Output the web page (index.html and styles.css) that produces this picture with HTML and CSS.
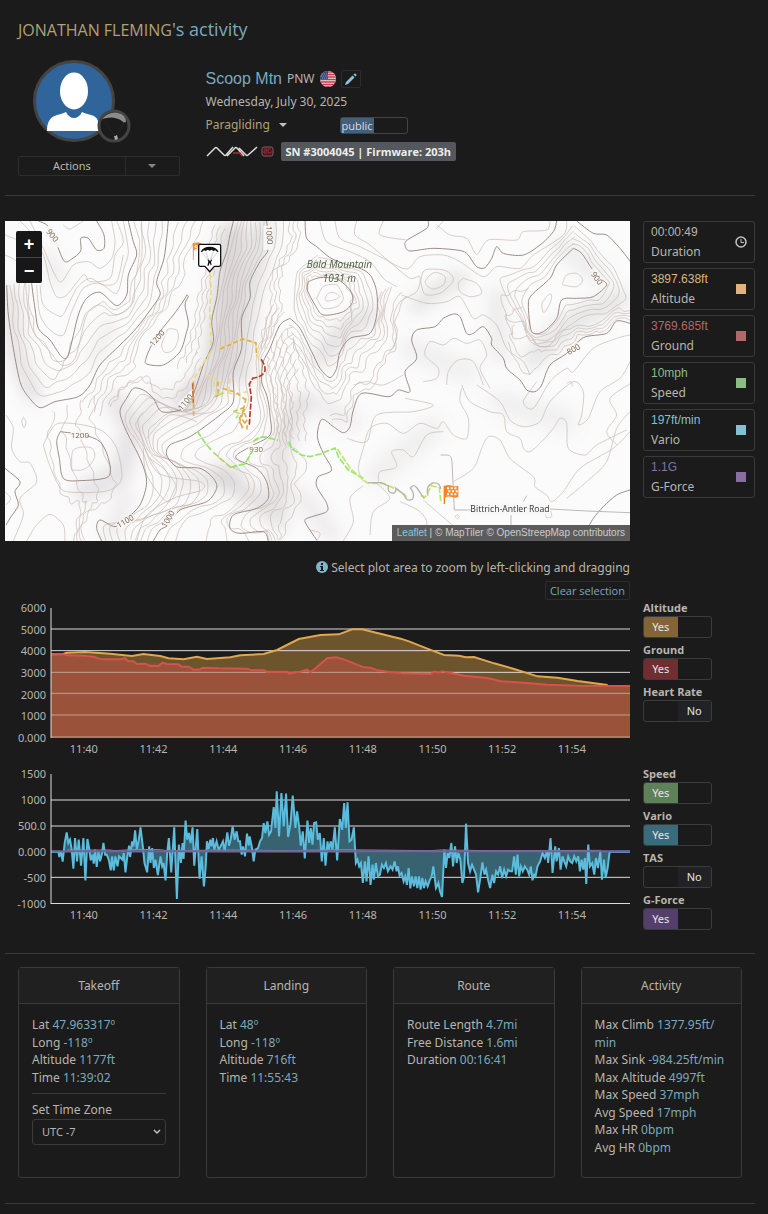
FILE: index.html
```html
<!DOCTYPE html>
<html lang="en">
<head>
<meta charset="utf-8">
<meta name="viewport" content="width=device-width, initial-scale=1">
<title>Activity</title>
<link rel="stylesheet" href="styles.css">
</head>
<body>
<main class="page">
  <h1 class="title"><span class="pilot">JONATHAN FLEMING</span>'s activity</h1>

  <header class="summary">
    <div class="profile">
      <svg class="avatar" viewBox="0 0 96 84" role="img" aria-label="Pilot avatar">
        <circle cx="41" cy="41" r="39.5" fill="#2f659b" stroke="#444" stroke-width="3"/>
        <ellipse cx="41" cy="31" rx="14" ry="18.500" fill="#fff"/>
        <path d="M14 71c0-9 3-14 10-16 4-1 7-2 9-3 2 4 5 6 8 6s6-2 8-6c2 1 5 2 9 3 7 2 8 6 8 16z" fill="#fff"/>
        <circle cx="81" cy="66" r="15" fill="#1b1b1b" stroke="#444" stroke-width="3"/>
        <path d="M69 59q8-8 16-6 8 2 8 9-2 2-4-1-8-6-20-2z" fill="#8b8b8b"/>
        <path d="M81 76l3-1 1 4-3 1z" fill="#aaa"/>
        <path d="M70 60l12 16 10-14" fill="none" stroke="#242424"/>
      </svg>
      <div class="split">
        <button type="button" class="split-main">Actions</button>
        <button type="button" class="split-caret" aria-label="More actions"><span class="caret"></span></button>
      </div>
    </div>
    <div class="info">
      <div class="site">
        <a class="site-name" href="#site">Scoop Mtn</a>
        <span class="region">PNW</span>
        <svg class="flag" viewBox="0 0 16 16" role="img" aria-label="United States">
          <clipPath id="round"><circle cx="8" cy="8" r="8"/></clipPath>
          <g clip-path="url(#round)">
            <path fill="#e9e4e6" d="M0 0h16v16H0z"/>
            <path stroke="#c9344a" stroke-width="1.300" d="M0 1h16M0 3.500h16M0 6h16M0 8.500h16M0 11h16M0 13.500h16M0 15.700h16"/>
            <path fill="#38477f" d="M0 0h8v8H0z"/>
            <path stroke="#aab2d0" stroke-width=".8" stroke-dasharray="1 1" d="M2 3h6M1 5h7M2 7h6"/>
          </g>
        </svg>
        <button type="button" class="edit" aria-label="Edit site">
          <svg viewBox="0 0 12 12"><path fill="#8fc3dc" d="M0 12l1-3 6.500-6.500 2 2L3 11zM8.500 1.500l1-1q1 0 1.500.5t.5 1.500l-1 1z"/></svg>
        </button>
      </div>
      <div class="date">Wednesday, July 30, 2025</div>
      <div class="sport">
        <button type="button" class="sport-pick">Paragliding <span class="caret"></span></button>
        <label class="visibility"><input type="checkbox" checked aria-label="Visibility"><span>public</span></label>
      </div>
      <div class="device">
        <svg class="device-logo" viewBox="0 0 69 12" role="img" aria-label="Nav device">
          <g fill="none" stroke="#ddd" stroke-width="1.500">
            <path d="M1 11L9 3q1-1 2 0l7 7q1 1 2 0l7-8M21 11l8-8q1-1 2 0l7 8M33 3l7 7q1 1 2 0l9-8"/>
            <path d="M27 8h7l2 3" stroke="#b32a36"/>
          </g>
          <rect x="56" y="2" width="11" height="9" rx="2" fill="#3b161b" stroke="#8a5a60"/>
          <path d="M58 4h3v2h-3v2h3M65 4h-3v4h3V6" fill="none" stroke="#a32a3a"/>
        </svg>
        <span class="badge">SN #3004045 | Firmware: 203h</span>
      </div>
    </div>
  </header>

  <section class="split-row">
    <div class="map">
      <svg class="map-canvas" viewBox="15 18 1875 960" preserveAspectRatio="xMidYMid slice" role="img" aria-label="Topographic map with flight track">
        <defs>
          <filter id="soft" x="-50%" y="-50%" width="200%" height="200%"><feGaussianBlur stdDeviation="24"/></filter>
        </defs>
        <rect x="0" y="0" width="1920" height="1000" fill="#fcfbfb"/>
        <g filter="url(#soft)" fill="none" stroke="#8e8a90" stroke-linecap="round">
          <path opacity=".32" stroke-width="80" d="M700 60L670 300 650 480 560 560"/>
          <path opacity=".25" stroke-width="60" d="M790 40L740 260 720 480"/>
          <path opacity=".24" stroke-width="50" d="M30 240L50 420 100 540"/>
          <path opacity=".22" stroke-width="60" d="M250 830L360 780 400 640 350 560"/>
          <path opacity=".24" stroke-width="60" d="M660 780L830 900 840 700 900 560"/>
          <path opacity=".22" stroke-width="60" d="M960 430L1040 340 1110 300"/>
          <path opacity=".2" stroke-width="50" d="M1250 270L1340 210 1380 190"/>
          <path opacity=".2" stroke-width="60" d="M1600 430L1700 330 1860 250"/>
          <path opacity=".17" stroke-width="50" d="M470 540L440 640M540 800L700 780"/>
          <path opacity=".15" stroke-width="50" d="M1490 240L1500 420M1680 90L1800 180"/>
          <path opacity=".14" stroke-width="50" d="M940 560L1060 620M380 850L330 960M900 840L1000 960"/>
          <path opacity=".1" stroke-width="70" d="M1130 780L1300 640M1500 560L1700 620M1230 400L1400 470"/>
          <path opacity=".14" stroke-width="40" d="M140 120L180 200M330 330L280 440"/>
        </g>
        <g class="minor" id="minor"></g>
        <g class="major" id="major"></g>
        <path class="road" d="M1322 720h20q12 0 14 20l7 145h50M1650 882l110 6 130 5M1533 900v40M1570 860l10-18"/>
        <g fill="#f8f7f7">
          <path d="M135 35l22-4 30 55-14 12-30-20zM790 32h28v72h-28zM452 385l38-42 10 16-40 45zM534 565l40-40 12 16-40 48zM212 649h48v24h-48zM346 925l50-28 10 20-50 28zM488 925l26-45 18 10-24 50zM745 690h44v24h-44zM1772 165l15-8 22 38-15 10zM1700 405l34-24 12 16-34 26zM1412 865h236v34h-236z" opacity=".9"/>
        </g>
        <g class="spot">
          <text transform="translate(138 50) rotate(52)">900</text>
          <text transform="translate(798 34) rotate(86)">1000</text>
          <text transform="translate(460 396) rotate(-50)">1200</text>
          <text transform="translate(545 588) rotate(-50)">1100</text>
          <text x="212" y="670">1200</text>
          <text transform="translate(356 940) rotate(-30)">1100</text>
          <text transform="translate(498 940) rotate(-60)">1000</text>
          <text x="748" y="710">930</text>
          <text transform="translate(1772 178) rotate(55)">900</text>
          <text transform="translate(1706 420) rotate(-28)">800</text>
        </g>
        <g class="peak">
          <text x="1018" y="159">Bald Mountain</text>
          <text x="1018" y="200">1031 m</text>
        </g>
        <text class="street" x="1530" y="890">Bittrich-Antler Road</text>
        <g class="track">
          <g stroke="#e8dc86">
            <path d="M630 175l4 50-5 60 3 50 1 60"/>
            <path d="M632 412l-30 45-17 30-6 20M655 400l36-16 34-12 28 6 14 10 4 34 10 16"/>
            <path d="M618 482l22 2 16 22 14-6M642 500l6 40 30-8 26 6 38-8M690 490l-4 44"/>
          </g>
          <g stroke="#dfae52" stroke-dasharray="14 8">
            <path d="M580 500l1 110M660 402l68-30 40 12 2 40M654 500v36M738 550l-14 60 18 24-2 10M700 590l36-14-20 40 14 24M668 520l40 12 30 24M646 545l22-12M718 606l8 30 16-22-14-30"/>
          </g>
          <g stroke="#b53c22" stroke-dasharray="18 5">
            <path d="M783 433q14 18 12 34-8 20-36 22l-11 18 6 40-4 50-2 32"/>
            <path d="M578 505l2 60" stroke="#c9703a"/>
          </g>
          <g stroke="#93e66a" stroke-dasharray="20 5">
            <path d="M592 648l22 34 22 26M692 757l22-6 20-4 24-40M760 680q20-20 44-12l30 8M866 680l8 20 30 20 26 5 30-8 45-18 12 30 28 36 45 25"/>
            <path d="M640 712l50 44 22-2" stroke="#b8d468"/>
            <path d="M700 588l18 8-10 14M650 535l18 4" stroke="#a8e882"/>
            <path d="M1012 702l40 60 50 42 50 2 40 18 28 22M1262 842l14 4 18-34 24 6 4 40" stroke="#bfe86a"/>
          </g>
          <g stroke="#b9b4ae" stroke-width="4" stroke-dasharray="none">
            <path d="M1105 803h40l20 10q-4 20 14 22 12-4 8-16l26 20q4 22 24 14 10-14-6-34 10-14 20 0l22 32M1284 842q-8-30 14-38 22-2 24 18"/>
          </g>
        </g>
        <path d="M578 86l16-3 8 2v18l-22 2v30" fill="#ea902f" stroke="#d8893c" stroke-width="2"/>
        <path d="M593 92h-8v5h8v6h-9" fill="none" stroke="#fff" stroke-width="3"/>
        <g>
          <path d="M600 88h58q4 0 4 4v57q0 5-5 5h-14l-14 16-14-16h-14q-5 0-5-5V92q0-4 4-4z" fill="#fff" stroke="#111" stroke-width="4"/>
          <path d="M602 110q8-15 27-15t27 15l-4 1-6-5-6 2-5-4-6 3-6-3-5 4-6-2-6 5z" fill="#111"/>
          <path d="M604 110l23 28M617 110l11 28M640 110l-10 28M654 110l-23 28" fill="none" stroke="#777"/>
          <path d="M624 133l4 4h4l3-4 1 3-3 5 2 9h-3l-3-7-3 9h-4l3-12-2-5z" fill="#111"/>
        </g>
        <path d="M1333 812v55" stroke="#ef7f22" stroke-width="4"/>
        <path d="M1335 812q10-4 20 0t20 0v34q-10 4-20 0t-20 2z" fill="#f08a2c"/>
        <path d="M1341 820h32M1345 829h30M1341 838h32" stroke="#fff" stroke-width="6" stroke-dasharray="6 5"/>
      </svg>
      <div class="zoom">
        <button type="button" aria-label="Zoom in">+</button>
        <button type="button" aria-label="Zoom out">−</button>
      </div>
      <div class="credit"><a href="#leaflet">Leaflet</a> | © MapTiler © OpenStreepMap contributors</div>
    </div>

    <div class="stats">
      <div class="stat"><div><div class="value">00:00:49</div><div>Duration</div></div>
        <svg class="clock" viewBox="0 0 12 12" aria-hidden="true"><circle cx="6" cy="6" r="5" fill="none" stroke="#c5c2be" stroke-width="1.500"/><path d="M6 3v3.500h3" fill="none" stroke="#c5c2be"/></svg></div>
      <div class="stat amber"><div><div class="value">3897.638ft</div><div>Altitude</div></div><span class="swatch"></span></div>
      <div class="stat red"><div><div class="value">3769.685ft</div><div>Ground</div></div><span class="swatch"></span></div>
      <div class="stat green"><div><div class="value">10mph</div><div>Speed</div></div><span class="swatch"></span></div>
      <div class="stat blue"><div><div class="value">197ft/min</div><div>Vario</div></div><span class="swatch"></span></div>
      <div class="stat violet"><div><div class="value">1.1G</div><div>G-Force</div></div><span class="swatch"></span></div>
    </div>
  </section>

  <section class="split-row hint-row">
    <div class="hint">
      <p><svg class="info-icon" viewBox="0 0 12 12" aria-hidden="true"><circle cx="6" cy="6" r="6" fill="#82b4cc"/><path d="M5 2h2v2H5zM4 5h3v4h1v1H4V9h1V6H4z" fill="#1b1b1b"/></svg> Select plot area to zoom by left-clicking and dragging</p>
      <button type="button" class="clear">Clear selection</button>
    </div>
  </section>

  <section class="split-row chart-row">
    <div class="chart">
      <div class="y-axis"><span>6000</span><span>5000</span><span>4000</span><span>3000</span><span>2000</span><span>1000</span><span>0.000</span></div>
      <svg class="plot" viewBox="153 177 1734 390" preserveAspectRatio="none" role="img" aria-label="Altitude and ground chart">
        <path class="alt-fill" d="M153 316L190 315 200 311 255 309 330 314 395 321 430 315 480 321 505 328 550 331 590 323 620 330 690 325 720 319 790 315 830 303 895 270 960 258 1015 256 1055 241 1085 241 1130 252 1200 269 1225 277 1280 299 1330 318 1375 320 1395 325 1420 324 1480 343 1540 360 1610 382 1670 386 1730 396 1820 408 1887 410V567H153z"/>
        <path class="ground-fill" d="M153 316L190 316 200 319 250 320 280 323 305 331 365 331 373 327 385 337 400 337 410 345 435 344 450 351 475 351 487 341 500 345 535 346 545 353 565 353 580 362 600 361 607 356 655 358 740 359 755 364 790 364 800 369 860 368 865 373 900 368 920 362 930 370 945 358 960 345 980 328 1007 325 1030 331 1060 343 1090 355 1110 356 1130 364 1170 370 1200 372 1250 374 1290 375 1300 368 1315 371 1325 367 1365 375 1390 380 1460 387 1500 397 1570 401 1640 407 1730 410 1887 411V567H153z"/>
        <path class="grid" d="M153 240H1887M153 305H1887M153 370H1887M153 433H1887M153 498H1887M153 564H1887"/>
        <path class="ground-fill over" d="M153 316L280 323 410 345 487 341 580 362 740 359 900 368 930 370 980 328 1007 325 1090 355 1200 372 1325 367 1500 397 1640 407 1887 411V567H153z"/>
        <path class="alt-line" d="M153 316L190 315 200 311 255 309 330 314 395 321 430 315 480 321 505 328 550 331 590 323 620 330 690 325 720 319 790 315 830 303 895 270 960 258 1015 256 1055 241 1085 241 1130 252 1200 269 1225 277 1280 299 1330 318 1375 320 1395 325 1420 324 1480 343 1540 360 1610 382 1670 386 1730 396 1820 408"/>
        <path class="ground-line" d="M153 316L190 316 200 319 250 320 280 323 305 331 365 331 373 327 385 337 400 337 410 345 435 344 450 351 475 351 487 341 500 345 535 346 545 353 565 353 580 362 600 361 607 356 655 358 740 359 755 364 790 364 800 369 860 368 865 373 900 368 920 362 930 370 945 358 960 345 980 328 1007 325 1030 331 1060 343 1090 355 1110 356 1130 364 1170 370 1200 372 1250 374 1290 375 1300 368 1315 371 1325 367 1365 375 1390 380 1460 387 1500 397 1570 401 1640 407 1730 410 1887 411"/>
        <path class="axis" d="M153 177V567"/>
      </svg>
      <div class="x-axis"><span>11:40</span><span>11:42</span><span>11:44</span><span>11:46</span><span>11:48</span><span>11:50</span><span>11:52</span><span>11:54</span></div>
    </div>
    <div class="toggles">
      <label class="toggle amber"><span class="toggle-name">Altitude</span><input type="checkbox" checked><span class="switch"><span>Yes</span></span></label>
      <label class="toggle red"><span class="toggle-name">Ground</span><input type="checkbox" checked><span class="switch"><span>Yes</span></span></label>
      <label class="toggle"><span class="toggle-name">Heart Rate</span><input type="checkbox"><span class="switch off"><span>No</span></span></label>
    </div>
  </section>

  <section class="split-row chart-row">
    <div class="chart">
      <div class="y-axis"><span>1500</span><span>1000</span><span>500.0</span><span>0.000</span><span>-500</span><span>-1000</span></div>
      <svg class="plot" viewBox="153 43 1734 390" preserveAspectRatio="none" role="img" aria-label="Speed, vario and g-force chart">
        <path class="grid" d="M153 121H1887M153 199H1887M153 276H1887M153 353H1887M153 431.500H1887"/>
        <path class="vario" id="vario" d=""/>
        <path class="speed-line" d="M200 271H330L345 273 410 269 480 270 500 273 690 271 880 273 1000 270 1290 273 1320 271 1480 273 1800 272"/>
        <path class="force-line" d="M153 275H1887"/>
        <path class="axis" d="M153 43V433"/>
      </svg>
      <div class="x-axis"><span>11:40</span><span>11:42</span><span>11:44</span><span>11:46</span><span>11:48</span><span>11:50</span><span>11:52</span><span>11:54</span></div>
    </div>
    <div class="toggles">
      <label class="toggle green"><span class="toggle-name">Speed</span><input type="checkbox" checked><span class="switch"><span>Yes</span></span></label>
      <label class="toggle blue"><span class="toggle-name">Vario</span><input type="checkbox" checked><span class="switch"><span>Yes</span></span></label>
      <label class="toggle"><span class="toggle-name">TAS</span><input type="checkbox"><span class="switch off"><span>No</span></span></label>
      <label class="toggle violet"><span class="toggle-name">G-Force</span><input type="checkbox" checked><span class="switch"><span>Yes</span></span></label>
    </div>
  </section>

  <section class="cards">
    <article class="card">
      <h2>Takeoff</h2>
      <div class="card-body">
        <div>Lat <b>47.963317º</b></div>
        <div>Long <b>-118º</b></div>
        <div>Altitude <b>1177ft</b></div>
        <div>Time <b>11:39:02</b></div>
        <div class="zone">
          <label for="zone">Set Time Zone</label>
          <div class="select-wrap">
            <select id="zone"><option>UTC -7</option></select>
            <svg viewBox="0 0 8 6" aria-hidden="true"><path d="M1 1l3 3 3-3" fill="none" stroke="#c5c2be" stroke-width="1.500"/></svg>
          </div>
        </div>
      </div>
    </article>
    <article class="card">
      <h2>Landing</h2>
      <div class="card-body">
        <div>Lat <b>48º</b></div>
        <div>Long <b>-118º</b></div>
        <div>Altitude <b>716ft</b></div>
        <div>Time <b>11:55:43</b></div>
      </div>
    </article>
    <article class="card">
      <h2>Route</h2>
      <div class="card-body">
        <div>Route Length <b>4.7mi</b></div>
        <div>Free Distance <b>1.6mi</b></div>
        <div>Duration <b>00:16:41</b></div>
      </div>
    </article>
    <article class="card">
      <h2>Activity</h2>
      <div class="card-body">
        <div>Max Climb <b>1377.95ft/<wbr>min</b></div>
        <div>Max Sink <b>-984.25ft/min</b></div>
        <div>Max Altitude <b>4997ft</b></div>
        <div>Max Speed <b>37mph</b></div>
        <div>Avg Speed <b>17mph</b></div>
        <div>Max HR <b>0bpm</b></div>
        <div>Avg HR <b>0bpm</b></div>
      </div>
    </article>
  </section>
</main>
<script src="plots.js"></script>
</body>
</html>
```
FILE: plots.js
```js
const parse = s => s.trim().split(/\s+/).map(p => p.split(',').map(Number));

// Catmull-Rom spline through the points, as an SVG path.
function smooth(pts) {
  let d = 'M' + pts[0].map(Math.round).join(' ');
  for (let i = 0; i < pts.length - 1; i++) {
    const a = pts[i - 1] || pts[i], b = pts[i], c = pts[i + 1], e = pts[i + 2] || c;
    d += 'C' + [b[0] + (c[0] - a[0]) / 7, b[1] + (c[1] - a[1]) / 7,
      c[0] - (e[0] - b[0]) / 7, c[1] - (e[1] - b[1]) / 7, c[0], c[1]].map(Math.round).join(' ');
  }
  return d;
}

function resample(pts, n) {
  const acc = [0];
  for (let i = 1; i < pts.length; i++) acc.push(acc[i - 1] + Math.hypot(pts[i][0] - pts[i - 1][0], pts[i][1] - pts[i - 1][1]));
  const out = [];
  for (let k = 0, i = 1; k <= n; k++) {
    const t = acc[acc.length - 1] * k / n;
    while (i < pts.length - 1 && acc[i] < t) i++;
    const f = (t - acc[i - 1]) / (acc[i] - acc[i - 1]);
    out.push([pts[i - 1][0] + (pts[i][0] - pts[i - 1][0]) * f, pts[i - 1][1] + (pts[i][1] - pts[i - 1][1]) * f]);
  }
  return out;
}

function add(id, pts) {
  const p = document.createElementNS('http://www.w3.org/2000/svg', 'path');
  p.setAttribute('d', smooth(pts));
  document.getElementById(id).appendChild(p);
}

// Contours lying between two neighbouring index contours.
function between(a, b, count) {
  const n = 32, p = resample(parse(a), n), q = resample(parse(b), n);
  for (let k = 1; k <= count; k++) {
    const t = k / (count + 1);
    add('minor', p.map((v, i) => [
      v[0] + (q[i][0] - v[0]) * t + 4 * Math.sin(i * 1.7 + k),
      v[1] + (q[i][1] - v[1]) * t + 4 * Math.cos(i * 2.1 + k)]));
  }
}

const L = {
  bowl: '95,205 105,280 115,340 150,375 185,425 205,420 235,300 260,250 300,232 350,272 380,240 385,180 410,120 400,80 385,18',
  west: '20,210 25,300 40,400 60,500 85,545 120,578 165,560 235,545 270,510 300,450 360,390 400,350 440,300 480,240 470,200 492,130 500,70 505,18',
  ridge: '700,18 690,60 680,110 660,170 650,250 635,320 640,380 610,450 590,510 570,560 540,585 485,590 460,550 430,525 400,520 380,550 360,590 380,650 420,730 440,800 420,870 380,910 345,935 300,915 290,940 305,978',
  spur: '800,18 806,100 780,140 750,200 750,250 725,310 725,400 700,470 700,560 660,600 600,645 560,670 510,690 500,720 530,755 600,760 640,790 650,820 620,860 540,885 505,930 480,945 460,978',
  gully: '870,310 840,330 810,400 790,440 785,500 800,540 810,600 810,660 750,695 710,720 715,735 770,760 800,800 805,850 770,880 700,900 690,940 720,955 790,950 805,978',
  bald: '915,18 920,70 950,95 990,128 1030,145 1080,160 1112,182 1130,230 1130,300 1110,355 1050,370 1020,410 1010,460 990,488 960,460 935,410 900,340 870,310',
  baldTop: '925,200 960,188 1010,192 1050,225 1058,260 1030,290 970,300 945,270 922,225 925,200',
  north: '1285,18 1280,40 1222,75 1215,90 1230,108 1300,100 1370,105 1400,115 1430,155 1455,158 1475,130 1490,95 1510,115 1570,120 1620,90 1660,50 1670,18',
  corner: '1730,18 1780,55 1820,60 1860,100 1895,145',
  knob: '1720,100 1670,150 1650,190 1595,240 1585,270 1595,350 1630,350 1670,310 1685,255 1730,250 1780,245 1820,210 1800,190 1775,160 1745,115 1720,100',
  east: '1890,325 1850,318 1820,355 1750,368 1700,415 1650,450 1625,510 1605,530 1580,525 1560,495 1520,460 1510,430 1475,390 1475,370 1450,335 1420,355 1400,355 1380,305 1360,297 1330,310 1305,335 1250,345 1235,375 1250,430 1215,470 1230,530 1195,525 1165,545 1085,535 1060,585 1050,635 1030,653 1000,635 965,613 952,665 970,715 995,765 955,785 950,815 980,865 980,890 930,907 915,920 950,975',
};
Object.values(L).forEach(s => add('major', parse(s)));
[
  '115,18 150,40 190,135 215,132 242,108 242,70 265,70 290,105 312,100 312,60 290,18',
  '560,240 550,258 520,300 480,350 455,390 438,430 440,447 490,450 540,410 560,350 565,320 555,270 565,245 560,240',
  '180,650 170,680 178,730 190,790 240,797 325,785 325,730 300,680 250,660 180,650',
  '15,760 60,800 45,830 55,870 30,910 18,930',
  '1890,825 1850,840 1810,875 1780,910 1760,945',
].forEach(s => add('major', parse(s)));

const gullyEdge = '800,250 790,330 770,400 760,500 770,580 760,640 690,680 640,700 620,735 700,750 730,800 720,850 660,890 590,900 560,978';
between(L.bowl, L.west, 5);
between(L.ridge, L.spur, 8);
between(L.spur, '870,18 880,70 850,120 840,180 ' + gullyEdge, 2);
between(gullyEdge, L.gully, 3);
between('850,18 860,70 840,120 800,190 800,260 780,330 770,400', '910,18 912,80 890,120 860,150 850,220 860,290 800,400', 3);
between(L.baldTop, '960,110 1030,145 1080,160 1112,182 1130,230 1130,300 1110,355 1050,370 1010,460 990,488 935,410 880,320 870,220 900,140 960,110', 6);
between(L.gully, '900,480 870,540 890,600 880,700 930,720 960,760 900,800 930,860 900,900 850,978', 6);
between('870,320 900,370 930,440 950,540 930,600 940,680', '790,440 785,500 800,540 810,600 815,660', 5);
between(L.west.split(' ').slice(7).reverse().join(' '), '640,18 600,90 560,140 580,180 530,230 500,290 430,370 410,440 430,470 360,500 330,560 310,620', 4);
between('690,40 660,140 640,220 620,330 620,400', '630,30 610,90 600,180 580,260 570,330 540,420 500,480', 3);
between('610,440 580,530 520,580 480,570 440,500 380,510 340,580', '580,400 550,450 500,500 460,490 430,460 380,500 320,560', 2);
between('110,600 130,620 100,660 105,760 130,840 180,870 220,850 230,900 215,978', '330,530 310,600 340,650 380,740 400,800 370,850 280,890 250,930 260,978', 4);
between(L.east.split(' ').slice(0, 12).join(' '), '1895,280 1850,270 1790,320 1690,330 1640,370 1600,380 1570,340 1560,280 1500,260 1490,180 1560,170 1600,170', 4);
between(L.knob, '1720,20 1640,100 1590,150 1480,170 1490,230 1560,310 1580,400 1640,410 1710,350 1760,320 1850,300 1895,260 1860,160 1800,100 1770,50 1720,20', 4);
between(L.bald.split(' ').slice(7).join(' '), '1190,215 1160,260 1165,330 1180,380 1120,440 1100,490 1060,480 1030,580 990,590 950,550 920,480 900,440 880,400', 4);
between('1190,215 1160,260 1165,330 1180,380 1120,440 1100,490 1060,480 1030,580 990,590', '1230,260 1200,330 1200,400 1160,440 1130,530 1070,560 1040,640 1000,620', 2);

[
  '15,60 60,80 90,120 95,205', '60,18 90,50 130,120 150,200 170,245 200,240 250,180 270,200 330,190 345,120 370,80 350,18',
  '90,18 130,100 165,180 185,200 220,150 265,140 300,160 335,130 345,80 335,18',
  '190,30 210,42 250,18', '120,210 130,270 170,300 190,298 230,220 270,190 310,210 350,200 370,120',
  '110,210 120,300 150,345 190,360 215,290 250,220 300,205 350,235 372,160 385,110 370,18',
  '15,120 50,140 75,200 85,290 100,350 150,410 185,450 225,430 260,300 300,270 350,300 400,260 405,190 425,130 425,18',
  '500,350 485,390 495,412 520,405 535,370 530,345 505,342 500,350',
  '215,765 220,705 270,697 285,720 270,750 245,765 215,765',
  '130,690 150,650 175,625 250,630 310,650 350,700 365,790 320,828 200,830 170,800 145,740 130,690',
  '65,620 70,608 78,622 72,638 65,620', '18,600 40,640 35,700 60,740 90,745 110,800 60,850 70,900 40,978',
  '80,978 110,930 150,898 190,930 195,978', '15,830 32,850 18,870', '430,590 415,630 470,770 600,800 605,825 520,850 440,900 410,978',
  '975,250 985,235 1000,232 1020,245 1000,255 980,258 975,250', '950,250 970,215 1010,210 1030,250 1010,275 970,280 950,250',
  '1275,200 1290,180 1310,172 1335,185 1330,210 1300,222 1280,212 1275,200', '1262,200 1275,165 1330,165 1355,180 1358,200 1320,235 1275,238 1262,200',
  '1390,190 1430,205 1445,235 1410,245 1380,230 1375,205 1390,190',
  '1005,18 1020,70 1080,95 1150,130 1220,162 1260,125 1330,120 1380,140 1450,185 1490,155 1560,160 1600,120 1690,60 1700,18',
  '960,18 980,80 1050,110 1110,140 1150,190 1190,215',
  '1070,18 1065,60 1110,90 1180,150 1230,190 1260,185 1250,230 1200,260 1180,310 1190,370 1170,410',
  '1310,30 1350,60 1400,70 1430,118 1465,75 1550,75 1570,50 1640,45 1650,18', '1150,18 1140,60 1220,75', '1310,40 1330,18',
  '1205,240 1280,265 1340,260 1380,245 1420,310 1450,300 1490,330 1520,400 1570,440 1590,480',
  '1690,200 1700,180 1730,175 1748,195 1730,215 1690,210 1690,200', '1628,290 1626,265 1645,240 1655,240 1650,265 1635,290 1628,290',
  '1270,500 1310,490 1315,460 1275,420 1290,380 1330,390 1360,370 1400,385 1440,375 1460,420 1440,460 1470,520',
  '1340,510 1345,470 1375,435 1420,440 1450,510',
  '1385,520 1380,560 1405,610 1400,670 1360,660 1330,620 1310,640 1260,625 1210,655 1160,625 1110,640 1090,700 1075,760 1090,800',
  '1385,510 1410,560 1470,590 1510,600 1520,650 1560,670 1570,700 1590,710 1625,680 1660,640 1680,610 1700,625 1705,700 1755,720 1790,690 1880,645',
  '1135,800 1140,770 1190,755 1175,710 1210,705 1240,725 1280,660 1330,650',
  '1360,800 1420,760 1445,700 1465,665 1500,675 1530,730 1600,785 1605,815 1640,840 1655,860 1690,830 1740,760 1840,700 1890,650',
  '1430,510 1500,560 1530,615 1570,635 1620,620 1650,560 1720,500 1750,530 1745,600 1735,630 1765,610 1800,530 1860,490 1890,440',
  '1610,500 1570,560 1600,580 1650,500 1700,460 1720,470 1780,400 1850,370 1890,360',
  '1900,500 1830,550 1850,600 1820,650 1850,690', '1700,505 1712,500 1718,515',
  '1200,860 1260,890 1280,930 1230,978', '1270,855 1310,890 1370,940', '1090,812 1050,850 1060,920 1030,978', '1130,805 1170,850 1120,890 1110,960',
  '1365,904 1372,900 1378,905 1372,911 1365,904', '1635,895 1640,908 1655,905 1652,888',
  '930,945 960,955 950,978', '1215,550 1300,570 1240,590 1130,600 1100,680 1040,670', '1060,510 1100,500 1150,510 1210,480',
  '440,670 510,600 590,620', '430,700 440,780 500,860 530,820 500,770 450,730',
  '1890,590 1850,640 1820,740 1760,800 1700,850',
].forEach(s => add('minor', parse(s)));

// Vertical speed samples.
const vario = parse(`175,276 178,292 183,276 188,306 194,250 200,218 205,250 210,240 215,270 220,327 225,235 231,305 236,240 243,318 250,235 256,362 262,238 267,265 272,302 277,285 281,312 285,270 290,322 295,275 300,305 306,280 310,250 315,285 320,285 326,300 332,332 336,290 341,332 346,290 352,320 357,290 362,295 367,300 371,280 376,338 381,295 387,258 390,292 396,245 400,260 405,212 410,270 416,240 421,203 428,260 433,310 441,338 447,260 451,310 456,265 461,325 466,300 473,346 481,290 486,320 490,310 496,362 501,280 506,235 513,338 522,203 530,418 536,255 542,310 547,250 550,298 556,183 561,240 566,220 571,250 577,203 582,318 591,208 598,357 604,290 611,380 616,325 620,245 625,268 630,240 634,260 638,235 642,270 649,245 655,270 661,260 668,245 673,275 681,218 686,258 691,240 697,200 703,240 709,215 714,245 719,245 724,285 728,260 734,290 740,222 745,258 748,230 755,265 760,305 765,270 773,265 779,245 785,235 790,190 795,220 801,185 806,225 812,215 820,142 825,205 829,95 836,230 843,100 850,200 857,102 863,232 870,195 877,108 885,205 890,155 896,200 901,258 907,215 913,296 921,183 926,250 931,205 936,255 941,190 947,188 952,240 958,220 964,305 970,235 975,318 981,245 985,270 991,245 996,270 1003,203 1010,302 1018,178 1025,210 1031,130 1036,205 1041,128 1047,245 1053,240 1060,203 1066,310 1071,300 1076,320 1081,310 1087,370 1093,305 1098,365 1104,290 1110,376 1116,315 1120,360 1126,310 1132,350 1138,345 1144,315 1150,325 1156,310 1162,335 1170,320 1176,330 1182,305 1188,335 1192,320 1197,348 1203,340 1209,365 1214,350 1219,376 1224,325 1229,386 1234,350 1240,380 1245,350 1250,385 1255,350 1260,390 1265,355 1270,385 1275,365 1281,380 1287,362 1293,350 1298,320 1303,362 1306,385 1313,370 1318,395 1324,412 1331,270 1336,325 1341,280 1346,295 1352,250 1357,320 1363,260 1368,310 1373,280 1379,300 1385,370 1390,350 1396,192 1402,310 1408,335 1414,315 1420,330 1426,345 1432,398 1438,360 1445,308 1451,345 1456,330 1462,360 1468,385 1475,345 1480,370 1486,335 1492,345 1498,320 1504,355 1510,330 1516,350 1522,330 1528,335 1534,335 1540,290 1545,345 1550,285 1555,350 1560,320 1566,335 1572,320 1579,330 1585,345 1590,320 1595,362 1600,345 1604,350 1610,320 1618,305 1625,280 1632,295 1638,275 1642,310 1649,235 1655,340 1663,260 1667,305 1674,265 1679,330 1685,290 1690,305 1696,320 1702,290 1708,305 1714,310 1720,290 1726,305 1732,290 1737,335 1742,300 1747,330 1752,295 1756,373 1762,255 1767,320 1774,310 1780,345 1785,295 1791,325 1798,276 1803,360 1809,300 1814,355 1820,325 1826,276`);
document.getElementById('vario').setAttribute('d', 'M153 276L' + vario.map(p => p.join(' ')).join('L') + 'H1887');
```
FILE: styles.css
```css
* { box-sizing: border-box; }

body {
  margin: 0;
  background: #1b1b1b;
  color: #b9b5ae;
  font: 12px/1.46 "Noto Sans", "Open Sans", sans-serif;
}

button, select { font: inherit; color: inherit; background: none; border: 0; padding: 0; }
a { color: #7aa9bf; text-decoration: none; }
p { margin: 0; }

.page { padding: 16px 13px 10px 5px; }

.title { margin: 0 13px; color: #7aa9bf; font: 18px/26px "Open Sans", sans-serif; }
.pilot { color: #b3a078; font-size: 16px; }

.summary {
  display: grid;
  grid-template-columns: 1fr 3fr;
  margin-top: 17px;
  height: 136px;
  border-bottom: 1px solid #3a3a3a;
}
.profile { display: flex; flex-direction: column; padding: 0 13px; }
.avatar { width: 100px; height: 84px; margin-left: 13px; }
.split {
  display: flex;
  height: 20px;
  margin-top: 12px;
  border: 1px solid #2e2e2e;
  border-radius: 2px;
  font-size: 11px;
}
.split-main { flex: 2; }
.split-caret { flex: 1; border-left: 1px solid #2a2a2a; color: #888; }
.caret {
  display: inline-block;
  border: 4px solid transparent;
  border-top-color: currentColor;
  border-bottom: 0;
  vertical-align: 2px;
}

.info { padding: 6px 13px 0; display: flex; flex-direction: column; }
.site, .sport, .device { display: flex; align-items: center; }
.site { height: 25px; gap: 5px; }
.site-name { font: 16px/24px "Liberation Sans", sans-serif; }
.flag { width: 16px; height: 16px; }
.edit { width: 20px; height: 18px; border: 1px solid #2c2c2c; border-radius: 2px; }
.edit svg { display: block; width: 12px; height: 12px; margin: auto; }
.date { height: 22px; line-height: 22px; }
.sport { height: 24px; }
.sport-pick { color: #b3a078; text-align: left; width: 134px; line-height: 20px; }
.sport-pick .caret { color: #c5c2be; margin-left: 6px; }
.visibility {
  display: flex;
  width: 68px;
  height: 17px;
  border: 1px solid #444;
  border-radius: 3px;
  color: #ddd;
  font: 11px/15px "Open Sans", sans-serif;
  position: relative;
}
.visibility span { width: 50%; background: #41607c; text-align: center; }
.visibility input, .toggle input { position: absolute; inset: 0; opacity: 0; margin: 0; width: 100%; height: 100%; }
.device { height: 28px; gap: 6px; }
.device-logo { width: 69px; height: 12px; }
.badge {
  padding: 0 5px;
  border-radius: 2px;
  background: #54575b;
  color: #eee;
  font: bold 11px/19px "Open Sans", sans-serif;
}

.split-row { display: grid; grid-template-columns: minmax(0, 1fr) 112px; column-gap: 13px; }
.summary + .split-row { margin-top: 25px; }

.map { position: relative; aspect-ratio: 625 / 320; overflow: hidden; }
.map-canvas { display: block; width: 100%; height: 100%; }
.minor, .major, .road, .track { fill: none; }
.minor { stroke: #c6b6ae; stroke-width: 2; }
.major { stroke: #9c8c83; stroke-width: 3; }
.road { stroke: #bdb9b7; stroke-width: 3; }
.track { stroke-width: 5; stroke-dasharray: 16 9; }
.spot { fill: #7d654c; font: 24px "Open Sans", sans-serif; }
.peak { fill: #46603a; font: italic 30px "Open Sans", sans-serif; text-anchor: middle; }
.street { fill: #333; font: 26px "Open Sans", sans-serif; text-anchor: middle; }
.zoom {
  position: absolute;
  left: 11px;
  top: 10px;
  display: grid;
  width: 26px;
  background: #171717;
  border-radius: 2px;
}
.zoom button { height: 26px; color: #fff; font: bold 18px/24px "Liberation Sans", sans-serif; }
.zoom button + button { border-top: 1px solid #444; }
.credit {
  position: absolute;
  right: 0;
  bottom: 0;
  padding: 0 5px;
  background: #5c5c5c;
  color: #ccc;
  font: 10px/16px "Liberation Sans", sans-serif;
}
.credit a { color: #8cc4dc; }

.stats { display: grid; gap: 5px; align-content: start; }
.stat {
  display: flex;
  align-items: center;
  justify-content: space-between;
  height: 42px;
  padding: 0 7px;
  border: 1px solid #3a3a3a;
  border-radius: 3px;
  line-height: 19px;
}
.value { font-family: "Liberation Sans", sans-serif; color: var(--text); }
.swatch { width: 10px; height: 10px; background: var(--text); margin-right: 1px; }
.clock { width: 12px; height: 12px; }
.amber { --text: #ddb57c; --fill: #836439; }
.red { --text: #b0686b; --fill: #702e31; }
.green { --text: #88bd86; --fill: #5f8159; }
.blue { --text: #86bfd2; --fill: #3b6a7b; }
.violet { --text: #876fa3; --fill: #533f69; }

.hint-row { padding-top: 18px; }
.hint { display: flex; flex-direction: column; align-items: flex-end; gap: 4px; line-height: 18px; }
.info-icon { width: 12px; height: 12px; vertical-align: -1px; }
.clear { height: 19px; padding: 0 4px; border: 1px solid #2c2c2c; border-radius: 2px; color: #7aa9bf; font: 11px/16px "Open Sans", sans-serif; }

.chart-row { min-height: 166px; }
.chart { display: grid; grid-template-columns: 41px minmax(0, 1fr); grid-template-rows: 130px 22px; column-gap: 5px; padding-top: 8px; }
.y-axis { display: flex; flex-direction: column; justify-content: space-between; margin: -7px 0; text-align: right; font-size: 11px; line-height: 14px; }
.plot { display: block; width: 100%; height: 130px; overflow: visible; }
.plot path { vector-effect: non-scaling-stroke; fill: none; }
.plot .grid { stroke: #dcdcdc; }
.plot .axis { stroke: #ddd; }
.plot .alt-fill { fill: #6c542d; }
.plot .ground-fill { fill: #9b533b; }
.plot .over { opacity: .45; }
.plot .alt-line { stroke: #e0a74e; stroke-width: 2; }
.plot .ground-line { stroke: #d6534b; stroke-width: 2; }
.plot .vario { stroke: #5bbcdc; stroke-width: 2; fill: #376270; }
.plot .speed-line { stroke: #79a070; }
.plot .force-line { stroke: #7560a8; stroke-width: 2; }
.x-axis { grid-column: 2; display: grid; grid-template-columns: repeat(8, 12%); margin-left: -2px; text-align: center; font-size: 11px; line-height: 22px; }

.toggles { display: grid; gap: 4px; align-content: start; font-size: 11px; }
.toggle { position: relative; width: 69px; }
.toggle-name { display: block; height: 16px; line-height: 16px; font-family: "Open Sans", sans-serif; font-weight: 700; white-space: nowrap; }
.switch { display: flex; height: 22px; border: 1px solid #3c3c3c; border-radius: 3px; overflow: hidden; color: #e5e5e5; line-height: 20px; text-align: center; }
.switch span { width: 50%; background: var(--fill); }
.switch.off { justify-content: flex-end; }
.switch.off span { background: #212225; }

.cards {
  display: grid;
  grid-template-columns: repeat(4, minmax(0, 1fr));
  gap: 26px;
  margin-top: 21px;
  padding: 13px 13px 25px;
  border-top: 1px solid #3a3a3a;
  border-bottom: 1px solid #3a3a3a;
}
.card { border: 1px solid #3a3a3a; border-radius: 3px; }
.card h2 { margin: 0; background: #202020; border-bottom: 1px solid #3a3a3a; font-size: 12px; font-weight: 400; line-height: 35px; text-align: center; }
.card-body { padding: 12px 13px 21px; }
.card b { color: #7aa9bf; font-weight: 400; }
.zone { margin-top: 7px; padding-top: 7px; border-top: 1px solid #3a3a3a; }
.zone label { display: block; }
.select-wrap { position: relative; }
.select-wrap svg { position: absolute; right: 5px; top: 10px; width: 8px; height: 6px; pointer-events: none; }
.select-wrap select { appearance: none; display: block; width: 100%; height: 26px; padding: 0 9px; border: 1px solid #3a3a3a; border-radius: 3px; font-size: 11px; }
```
